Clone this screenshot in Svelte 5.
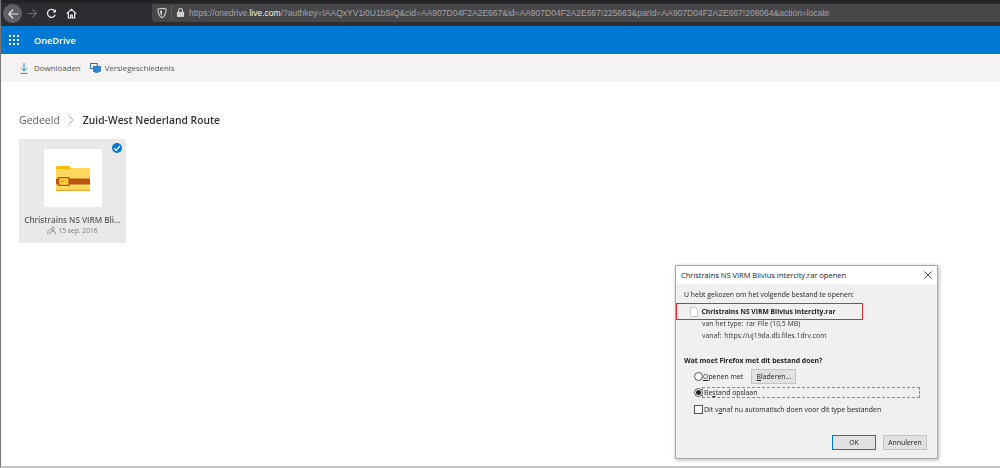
<script>
	const crumbs = { parent: 'Gedeeld', current: 'Zuid-West Nederland Route' };
</script>

<div class="page">
	<header class="browser">
		<button class="back" aria-label="Terug">
			<svg width="12" height="12" viewBox="0 0 14 14"><path d="M13 7H2M7 2 2 7l5 5" fill="none" stroke="#e8e8e8" stroke-width="1.4"/></svg>
		</button>
		<svg class="nav" width="11" height="11" viewBox="0 0 14 14"><path d="M1 7h11M7 2l5 5-5 5" fill="none" stroke="#6f6f72" stroke-width="1.4"/></svg>
		<svg class="nav" width="11" height="11" viewBox="0 0 14 14"><path d="M11.600 8.500A5 5 0 1 1 10.500 3.400L12 4.800" fill="none" stroke="#e4e4e6" stroke-width="1.6"/><path d="M12.600 1.200v4.400H8.200z" fill="#e4e4e6"/></svg>
		<svg class="nav" width="11" height="11" viewBox="0 0 14 14"><path d="M1 7.200 7 1.600l6 5.600M3 6v6.500h3V9h2v3.500h3V6" fill="none" stroke="#e4e4e6" stroke-width="1.600"/></svg>
		<div class="urlbar">
			<svg width="10" height="12" viewBox="0 0 11 12"><path d="M1 1.600 5.500.7l4.500.9c0 4.500-1 7.800-4.500 9.600C2 9.400 1 6.100 1 1.600z" fill="none" stroke="#d0d0d2" stroke-width="1.200"/><path d="M5.500 3v6c-1.500-1-2.200-3-2.200-5.500z" fill="#d0d0d2"/></svg>
			<span class="sep"></span>
			<svg width="9" height="11" viewBox="0 0 10 11"><path d="M2.800 5V3.300a2.200 2.200 0 0 1 4.400 0V5" fill="none" stroke="#d0d0d2" stroke-width="1.200"/><rect x="1" y="4.800" width="8" height="5.700" rx=".8" fill="#d0d0d2"/></svg>
			<span class="url">https://onedrive.<b>live.com</b>/?authkey=!AAQxYV1i0U1bSiQ&amp;cid=AA907D04F2A2E667&amp;id=AA907D04F2A2E667!225663&amp;parId=AA907D04F2A2E667!208064&amp;action=locate</span>
		</div>
	</header>

	<div class="suitebar">
		<svg class="waffle" width="10" height="10" viewBox="0 0 10 10" fill="#fff">
			{#each [0, 4, 8] as y}
				{#each [0, 4, 8] as x}
					<rect {x} {y} width="2" height="2" />
				{/each}
			{/each}
		</svg>
		<span class="brand">OneDrive</span>
	</div>

	<div class="commands">
		<span class="cmd">
			<svg class="dl" width="8" height="11" viewBox="0 0 8 11"><path d="M4 0v8M1.200 5.200 4 8l2.800-2.800M.5 10.400h7" fill="none" stroke="#2b88d8" stroke-width="1"/></svg>
			Downloaden
		</span>
		<span class="cmd">
			<svg width="11" height="10" viewBox="0 0 13 12"><rect x=".6" y=".6" width="8" height="6" fill="none" stroke="#2b6cb0" stroke-width="1.200"/><rect x="4" y="4" width="8.400" height="6" fill="#2b88d8" stroke="#1f5f9f" stroke-width=".8"/><path d="M6 10v1.500h4" fill="none" stroke="#1f5f9f"/></svg>
			Versiegeschiedenis
		</span>
	</div>

	<main class="content">
		<nav class="breadcrumb">
			<span class="parent">{crumbs.parent}</span>
			<svg width="8" height="12" viewBox="0 0 8 12"><path d="M1.500 1.500 6 6l-4.500 4.500" fill="none" stroke="#a6a6a6" stroke-width="1"/></svg>
			<span class="current">{crumbs.current}</span>
		</nav>

		<div class="tile">
			<span class="check">
				<svg width="10" height="10" viewBox="0 0 10 10"><path d="M2 5.300 4.200 7.300 8 3" fill="none" stroke="#fff" stroke-width="1.200"/></svg>
			</span>
			<div class="thumb">
				<svg width="34" height="25" viewBox="0 0 34 25">
					<path d="M0 1.500A1.500 1.500 0 0 1 1.500 0H13l3 3H0z" fill="#ffb900"/>
					<path d="M0 3h14l2-1h16.500A1.500 1.500 0 0 1 34 3.500V25H1.500A1.500 1.500 0 0 1 0 23.500z" fill="#ffd75e"/>
					<rect y="23.800" width="34" height="1.200" fill="#f0a72f"/>
					<rect y="12.500" width="34" height="6" fill="#ba5413"/>
					<rect x="2.600" y="11.600" width="10.400" height="7.800" fill="#ffc83d" stroke="#ba5413" stroke-width="1.200"/>
					<rect x="5" y="15" width="3" height="1" fill="#d98a2b"/>
				</svg>
			</div>
			<div class="name">Christrains NS VIRM Bli...</div>
			<div class="meta">
				<svg width="9" height="9" viewBox="0 0 10 10"><circle cx="6.500" cy="3" r="1.700" fill="none" stroke="#777" stroke-width=".9"/><path d="M3.500 9c0-2 1.300-3.400 3-3.400S9.500 7 9.500 9M3.500 3.500 1 6v3" fill="none" stroke="#777" stroke-width=".9"/></svg>
				15 sep. 2016
			</div>
		</div>
	</main>

	<section class="dialog">
		<div class="titlebar">
			<span>Christrains NS VIRM Blivius intercity.rar openen</span>
			<svg width="8" height="8" viewBox="0 0 8 8"><path d="M.5.500l7 7M7.500.500l-7 7" stroke="#333" stroke-width=".9"/></svg>
		</div>
		<div class="body">
			<p class="intro">U hebt gekozen om het volgende bestand te openen:</p>
			<div class="file">
				<svg width="8" height="10" viewBox="0 0 8 10"><path d="M.5.500h5l2 2v7h-7z" fill="#fff" stroke="#bbb" stroke-width=".8"/></svg>
				<b>Christrains NS VIRM Blivius intercity.rar</b>
			</div>
			<div class="info type"><span>van het type:</span> rar File (10,5 MB)</div>
			<div class="info from"><span>vanaf:</span> https://uj19da.db.files.1drv.com</div>

			<h4>Wat moet Firefox met dit bestand doen?</h4>
			<div class="choice open">
				<i class="radio"></i>
				<span><u>O</u>penen met</span>
				<span class="btn browse"><u>B</u>laderen...</span>
			</div>
			<div class="choice save">
				<i class="radio on"></i>
				<span class="focus">Be<u>s</u>tand opslaan</span>
			</div>
			<div class="choice always">
				<i class="box"></i>
				<span>Dit v<u>a</u>naf nu automatisch doen voor dit type bestanden</span>
			</div>
			<div class="actions">
				<span class="btn primary">OK</span>
				<span class="btn">Annuleren</span>
			</div>
		</div>
	</section>
</div>

<style>
	:global(body) {
		margin: 0;
		background: #fff;
	}

	.page {
		position: relative;
		width: 1000px;
		height: 468px;
		overflow: hidden;
		box-sizing: border-box;
		border-left: 1px solid #777;
		border-bottom: 2px solid #c4c4c4;
		font-family: 'Open Sans', 'Liberation Sans', sans-serif;
		color: #333;
		filter: blur(0.35px);
	}

	.browser {
		height: 26px;
		margin-left: -1px;
		box-sizing: border-box;
		padding: 0 0 0 3px;
		background: #2d2c30;
		border-top: 3px solid #232326;
		display: flex;
		align-items: center;
		gap: 8.500px;
	}

	.back {
		width: 19px;
		height: 19px;
		padding: 0;
		border: 0;
		border-radius: 50%;
		background: #616165;
		display: flex;
		align-items: center;
		justify-content: center;
		margin-top: -2px;
		margin-right: -4px;
	}

	.nav {
		margin-top: -2px;
		flex: none;
	}

	.urlbar {
		margin-left: 67px;
		flex: 1;
		height: 18px;
		margin-top: -4px;
		background: #47474a;
		display: flex;
		align-items: center;
		padding-left: 5px;
		gap: 4px;
		border-radius: 2px 0 0 2px;
		overflow: hidden;
	}

	.sep {
		width: 1px;
		height: 14px;
		background: #5e5e61;
	}

	.url {
		font-family: 'Liberation Sans', sans-serif;
		font-size: 8.500px;
		color: #a3a3a6;
		white-space: nowrap;
	}

	.url b {
		font-weight: 400;
		color: #f2f2f2;
	}

	.suitebar {
		height: 28px;
		background: #0078d4;
		display: flex;
		align-items: center;
		color: #fff;
		padding-left: 8px;
		gap: 15px;
	}

	.brand {
		font-size: 9.200px;
		font-weight: 600;
	}

	.commands {
		height: 28px;
		background: #f4f3f2;
		display: flex;
		align-items: center;
		padding-left: 19px;
		gap: 9px;
	}

	.cmd {
		display: flex;
		align-items: center;
		gap: 4px;
		font-size: 7.900px;
		color: #555;
	}

	.dl {
		margin-right: 2px;
	}

	.content {
		padding: 30px 0 0 18px;
	}

	.breadcrumb {
		display: flex;
		align-items: center;
		height: 16px;
	}

	.parent {
		font-size: 10.500px;
		color: #605e5c;
	}

	.breadcrumb svg {
		margin: 0 8px 0 7px;
	}

	.current {
		font-size: 10.300px;
		font-weight: 600;
		color: #323130;
	}

	.tile {
		position: relative;
		width: 107px;
		height: 104px;
		margin-top: 11px;
		background: #ebe9e8;
		display: flex;
		flex-direction: column;
		align-items: center;
		padding-top: 10px;
		box-sizing: border-box;
	}

	.check {
		position: absolute;
		top: 4px;
		right: 4px;
		width: 10px;
		height: 10px;
		border-radius: 50%;
		background: #0078d4;
		display: flex;
	}

	.thumb {
		width: 58px;
		height: 58px;
		background: #fff;
		display: flex;
		align-items: center;
		justify-content: center;
	}

	.name {
		margin-top: 7px;
		font-size: 8.100px;
		font-weight: 600;
		color: #605e5c;
		white-space: nowrap;
	}

	.meta {
		margin-top: 1px;
		display: flex;
		align-items: center;
		gap: 2px;
		font-size: 6.700px;
		color: #797775;
	}

	.dialog {
		position: absolute;
		left: 674px;
		top: 265px;
		width: 263px;
		height: 194px;
		box-sizing: border-box;
		background: #f0f0f0;
		border: 1px solid #a8a8a8;
		box-shadow: 1px 1px 4px rgba(0, 0, 0, 0.3);
		font-family: 'Open Sans', 'Liberation Sans', sans-serif;
		font-size: 6.900px;
		color: #222;
	}

	.titlebar {
		height: 18px;
		background: #fff;
		display: flex;
		align-items: center;
		justify-content: space-between;
		padding: 0 5px;
		font-size: 7.500px;
	}

	.body {
		padding: 6px 0 0 8px;
	}

	.intro {
		margin: 0;
		line-height: 10px;
	}

	.file {
		margin: 3px 0 0 -8px;
		width: 187px;
		height: 17px;
		box-sizing: border-box;
		border: 1.500px solid #e8262c;
		display: flex;
		align-items: center;
		gap: 4px;
		padding-left: 12.500px;
		font-size: 6.750px;
	}

	.info {
		margin-left: 18px;
		height: 12px;
		line-height: 12px;
		color: #333;
	}

	.type {
		margin-top: -2px;
	}

	.info span {
		margin-right: 1px;
	}

	h4 {
		margin: 14px 0 0;
		font-size: 6.900px;
		line-height: 10px;
		font-weight: 700;
	}

	.choice {
		display: flex;
		align-items: center;
		margin-left: 10px;
	}

	.open {
		margin-top: 3px;
	}

	.radio {
		width: 7px;
		height: 7px;
		border: 1px solid #555;
		border-radius: 50%;
		background: #fff;
		position: relative;
		flex: none;
	}

	.radio.on::after {
		content: '';
		position: absolute;
		inset: 1px;
		border-radius: 50%;
		background: #222;
	}

	.box {
		width: 7px;
		height: 7px;
		border: 1px solid #555;
		background: #fff;
		margin-right: 1px;
		flex: none;
	}

	.btn {
		height: 15px;
		line-height: 13px;
		box-sizing: border-box;
		border: 1px solid #c4c4c4;
		background: #e1e1e1;
		text-align: center;
		display: block;
	}

	.browse {
		width: 45px;
		margin-left: 8px;
	}

	.save {
		margin-top: 3px;
	}

	.focus {
		width: 218px;
		height: 11px;
		line-height: 9px;
		margin-left: -1px;
		padding-left: 1px;
		box-sizing: border-box;
		border: 1px dashed #888;
	}

	.always {
		margin-top: 7px;
	}

	.actions {
		display: flex;
		justify-content: flex-end;
		gap: 7px;
		margin: 21px 10px 0 0;
	}

	.actions .btn {
		width: 44px;
		height: 15px;
		line-height: 13px;
	}

	.primary {
		border: 1px solid #0078d7 !important;
	}
</style>
